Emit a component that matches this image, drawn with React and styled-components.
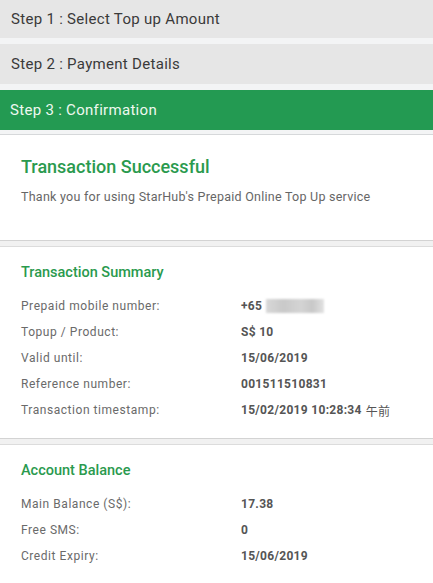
import React from 'react';
import styled, { createGlobalStyle } from 'styled-components';

const GlobalStyle = createGlobalStyle`
  body {
    margin: 0;
    background: #ffffff;
    font-family: Roboto, "Noto Sans", Arial, sans-serif;
  }
`;

const Page = styled.div`
  width: 433px;
  overflow: hidden;
`;

const StepList = styled.div`
  display: flex;
  flex-direction: column;
  gap: 6px;
  background: #f3f4f5;
  padding-bottom: 4px;
  border-bottom: 1px solid #d6d8da;
`;

const Step = styled.div`
  height: ${p => (p.$first ? '38px' : '40px')};
  display: flex;
  align-items: center;
  padding-left: ${p => (p.$active ? '10px' : '11px')};
  font-size: 15px;
  letter-spacing: 0.3px;
  background: ${p => (p.$active ? '#239a52' : '#e6e6e6')};
  color: ${p => (p.$active ? '#eef8ef' : '#3a3a3a')};
`;

const Section = styled.div`
  padding: ${p => p.$pad || '16px 21px 15px'};
  background: #fff;
`;

const Band = styled.div`
  height: 5px;
  background: #f1f1f1;
  border-top: 1px solid #d3d3d3;
  border-bottom: 1px solid #dcdcdc;
`;

const BigTitle = styled.h1`
  margin: 0 0 9px;
  font-size: 18px;
  line-height: 24px;
  font-weight: 500;
  color: #2a9a4e;
`;

const Note = styled.p`
  margin: 0;
  font-size: 12.5px;
  line-height: 18px;
  letter-spacing: 0.25px;
  color: #666;
`;

const Title = styled.h2`
  margin: 0 0 10px;
  font-size: 14.5px;
  line-height: 20px;
  font-weight: 500;
  color: #2a9a4e;
`;

const Row = styled.div`
  display: grid;
  grid-template-columns: 220px 1fr;
  height: 26px;
  align-items: center;
  font-size: 12px;
`;

const Label = styled.span`
  color: #6a6a6a;
  letter-spacing: 0.55px;
`;

const Value = styled.span`
  color: #555;
  font-weight: 700;
  letter-spacing: 0.3px;
  display: flex;
  align-items: center;
`;

const Blur = styled.span`
  display: inline-block;
  width: 58px;
  height: 14px;
  margin-left: 4px;
  background: linear-gradient(90deg, #d8d8d8 0%, #c9c9c9 30%, #d4d4d4 60%, #c8c8c8 80%, #e2e2e2 100%);
  filter: blur(1.2px);
`;

const Cjk = styled.span`
  font-family: "Noto Sans CJK JP", sans-serif;
  font-weight: 400;
  margin-left: 4px;
`;

const summary = [
  ['Prepaid mobile number:', <>+65<Blur /></>],
  ['Topup / Product:', 'S$ 10'],
  ['Valid until:', '15/06/2019'],
  ['Reference number:', '001511510831'],
  ['Transaction timestamp:', <>15/02/2019 10:28:34<Cjk>午前</Cjk></>],
];

const balance = [
  ['Main Balance (S$):', '17.38'],
  ['Free SMS:', '0'],
  ['Credit Expiry:', '15/06/2019'],
];

export default function App() {
  return (
    <Page>
      <GlobalStyle />
      <StepList>
        <Step $first>Step 1 : Select Top up Amount</Step>
        <Step>Step 2 : Payment Details</Step>
        <Step $active>Step 3 : Confirmation</Step>
      </StepList>

      <Section $pad="20px 21px 34px">
        <BigTitle>Transaction Successful</BigTitle>
        <Note>Thank you for using StarHub's Prepaid Online Top Up service</Note>
      </Section>

      <Band />

      <Section>
        <Title>Transaction Summary</Title>
        {summary.map(([l, v]) => (
          <Row key={l}>
            <Label>{l}</Label>
            <Value>{v}</Value>
          </Row>
        ))}
      </Section>

      <Band />

      <Section>
        <Title>Account Balance</Title>
        {balance.map(([l, v]) => (
          <Row key={l}>
            <Label>{l}</Label>
            <Value>{v}</Value>
          </Row>
        ))}
      </Section>
    </Page>
  );
}
